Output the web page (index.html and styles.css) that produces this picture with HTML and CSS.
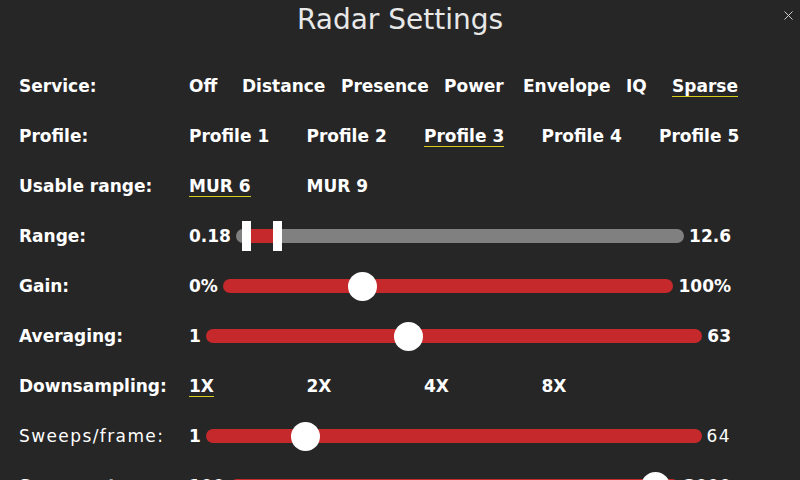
FILE: index.html
```html
<!DOCTYPE html>
<html>
<head>
<meta charset="utf-8">
<link rel="stylesheet" href="styles.css">
</head>
<body>
<div class="screen">
  <header class="header">
    <h1 class="title">Radar Settings</h1>
    <button class="close" aria-label="Close">
      <svg width="9" height="9" viewBox="0 0 9 9"><path d="M0.5 0.5L8.5 8.5M8.5 0.5L0.5 8.5" stroke="#d0d0d0" stroke-width="1" fill="none"/></svg>
    </button>
  </header>
  <div class="rows">
    <div class="row">
      <div class="label">Service:</div>
      <div class="options service">
        <span class="opt">Off</span>
        <span class="opt">Distance</span>
        <span class="opt">Presence</span>
        <span class="opt">Power</span>
        <span class="opt">Envelope</span>
        <span class="opt">IQ</span>
        <span class="opt sel">Sparse</span>
      </div>
    </div>
    <div class="row">
      <div class="label">Profile:</div>
      <div class="options cols">
        <span class="opt">Profile 1</span>
        <span class="opt">Profile 2</span>
        <span class="opt sel">Profile 3</span>
        <span class="opt">Profile 4</span>
        <span class="opt">Profile 5</span>
      </div>
    </div>
    <div class="row">
      <div class="label">Usable range:</div>
      <div class="options cols">
        <span class="opt sel">MUR 6</span>
        <span class="opt">MUR 9</span>
      </div>
    </div>
    <div class="row">
      <div class="label">Range:</div>
      <div class="slider">
        <span class="val">0.18</span>
        <div class="track gray">
          <div class="fill" style="left:3.3%;width:5%"></div>
          <div class="handle" style="left:2.3%"></div>
          <div class="handle" style="left:9.2%"></div>
        </div>
        <span class="val">12.6</span>
      </div>
    </div>
    <div class="row">
      <div class="label">Gain:</div>
      <div class="slider">
        <span class="val">0%</span>
        <div class="track red"><div class="knob" style="left:30.9%"></div></div>
        <span class="val">100%</span>
      </div>
    </div>
    <div class="row">
      <div class="label">Averaging:</div>
      <div class="slider">
        <span class="val">1</span>
        <div class="track red"><div class="knob" style="left:40.9%"></div></div>
        <span class="val">63</span>
      </div>
    </div>
    <div class="row">
      <div class="label">Downsampling:</div>
      <div class="options cols">
        <span class="opt sel">1X</span>
        <span class="opt">2X</span>
        <span class="opt">4X</span>
        <span class="opt">8X</span>
      </div>
    </div>
    <div class="row">
      <div class="label light">Sweeps/frame:</div>
      <div class="slider">
        <span class="val">1</span>
        <div class="track red"><div class="knob" style="left:20.1%"></div></div>
        <span class="val light">64</span>
      </div>
    </div>
    <div class="row">
      <div class="label">Sweep rate:</div>
      <div class="slider">
        <span class="val">100</span>
        <div class="track red"><div class="knob" style="left:94.9%"></div></div>
        <span class="val">3000</span>
      </div>
    </div>
  </div>
</div>
</body>
</html>
```
FILE: styles.css
```css
html, body {
  margin: 0;
  padding: 0;
  background: #262626;
  width: 800px;
  height: 480px;
  overflow: hidden;
}
.screen {
  width: 800px;
  height: 480px;
  overflow: hidden;
  font-family: "DejaVu Sans", sans-serif;
  color: #ffffff;
}
.header {
  position: relative;
  height: 40px;
}
.title {
  margin: 0;
  height: 40px;
  line-height: 40px;
  font-size: 28px;
  font-weight: normal;
  text-align: center;
  color: #e8e8e8;
}
.close {
  position: absolute;
  right: 7px;
  top: 11px;
  width: 9px;
  height: 9px;
  padding: 0;
  border: 0;
  background: none;
  display: flex;
}
.rows {
  margin-top: 21px;
  padding: 0 69px 0 19px;
}
.row {
  height: 50px;
  display: flex;
  align-items: center;
  font-size: 17px;
  font-weight: bold;
}
.label {
  width: 170px;
  flex: none;
  white-space: nowrap;
}
.light {
  font-weight: normal;
  letter-spacing: 1.4px;
}
.options {
  display: grid;
  align-items: center;
  white-space: nowrap;
}
.service {
  grid-template-columns: 53px 99px 103px 79px 103px 46px auto;
}
.cols {
  grid-template-columns: repeat(5, 117.5px);
}
.opt {
  display: inline-block;
  justify-self: start;
  border-bottom: 1px solid transparent;
  padding-top: 1px;
}
.opt.sel {
  border-bottom-color: #d8cc1c;
}
.slider {
  flex: 1;
  display: flex;
  align-items: center;
}
.val {
  flex: none;
  white-space: nowrap;
}
.track {
  position: relative;
  flex: 1;
  height: 14px;
  border-radius: 7px;
  margin: 0 5px;
}
.track.red {
  background: #c6292b;
}
.track.gray {
  background: #808080;
}
.fill {
  position: absolute;
  top: 0;
  height: 14px;
  background: #c6292b;
}
.handle {
  position: absolute;
  top: -8px;
  width: 9px;
  height: 30px;
  margin-left: -4.5px;
  background: #ffffff;
}
.knob {
  position: absolute;
  top: -7.5px;
  width: 29px;
  height: 29px;
  margin-left: -14.5px;
  border-radius: 50%;
  background: #ffffff;
}
```
